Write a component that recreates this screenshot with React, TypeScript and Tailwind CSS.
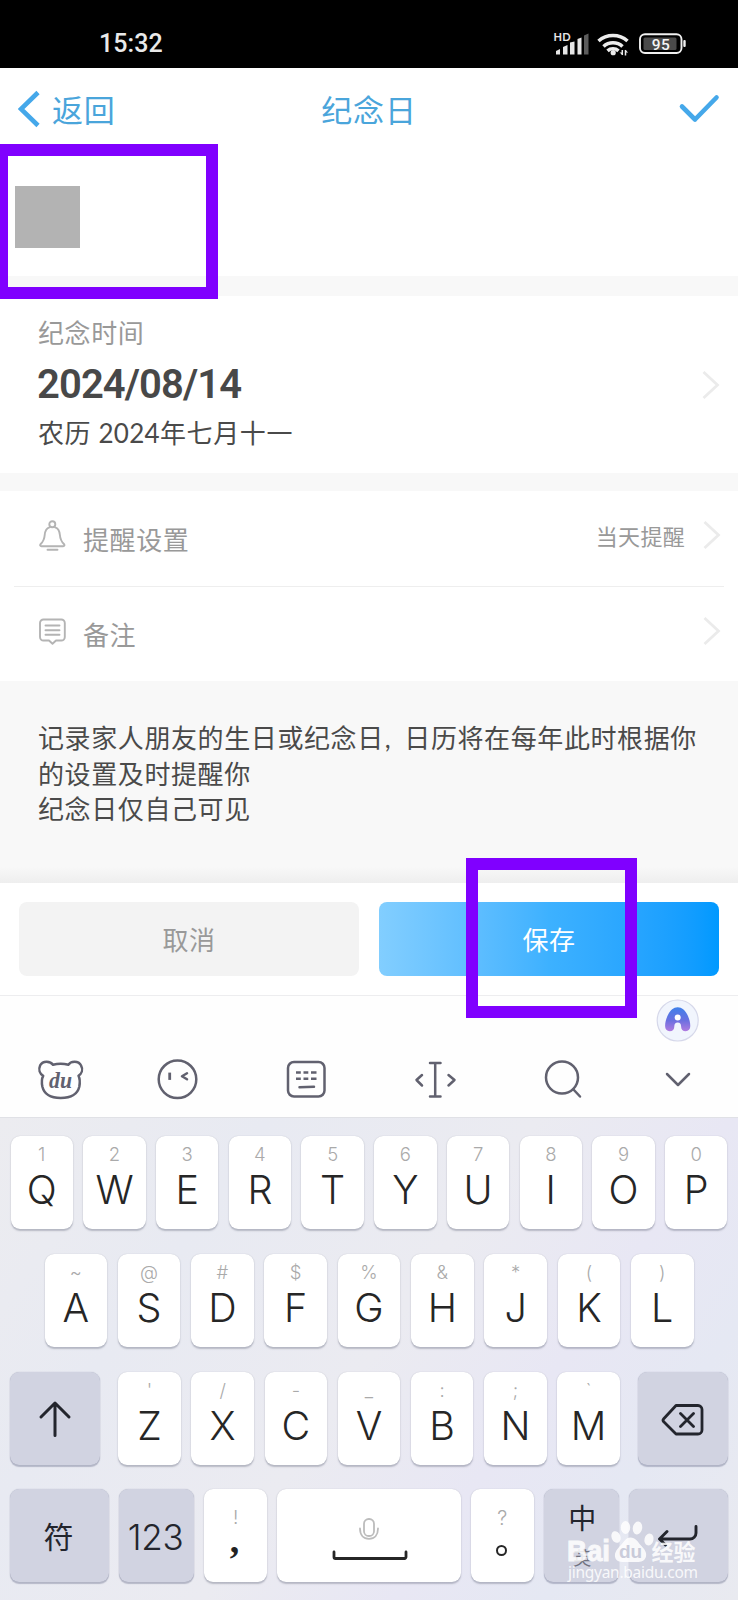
import React from 'react';

const CJK = "font-['Lato','Noto_Sans_CJK_SC',sans-serif]";

function StatusBar() {
  return (
    <div className="h-[68px] bg-black flex items-start justify-between pl-[99px] pr-[52px] shrink-0">
      <span className="mt-[28px] text-[25px] leading-[32px] font-['Roboto',sans-serif] font-medium tracking-[0.1px] text-[#e9e9e9]">15:32</span>
      <svg className="mt-[30px]" width="134" height="28" viewBox="552 30 134 28" fill="none">
        <text x="553.500" y="41" fontSize="11" fontWeight="700" fill="#e6e6e6" fontFamily="Lato" textLength="17">HD</text>
        <path d="M556 54.500v-3.500l4-2v5.500zM563 54.500v-7.500l4.500-2v9.500zM570 54.500v-12l4.500-1v13zM577.500 54.500V39l4-1.500v17z" fill="#e6e6e6" />
        <path d="M584 54.500V35.500l4.500-2v21z" fill="#5c5c5c" />
        <g stroke="#ececec" strokeWidth="3.600">
          <path d="M598.500 41a22 22 0 0 1 29 0M603.500 46.500a14 14 0 0 1 19 0M607.500 50.800a8.500 8.500 0 0 1 11 0" />
        </g>
        <circle cx="613.200" cy="52.700" r="2.600" fill="#ececec" />
        <path d="M622.300 50v5M625.500 50v5.500" stroke="#ececec" strokeWidth="1.500" />
        <path d="m622.800 55.200-3.300-2.600h3.300zM625 49.800l3.200 2.600H625z" fill="#ececec" />
        <rect x="640" y="34.200" width="41.500" height="18.800" rx="5" stroke="#f0f0f0" strokeWidth="1.900" />
        <rect x="643.500" y="37.500" width="33" height="12.500" rx="1.500" fill="#4a4a4a" />
        <rect x="683.300" y="40" width="2.400" height="7" rx="1" fill="#f0f0f0" />
        <text x="661" y="49.600" textAnchor="middle" fontSize="15.500" fontWeight="500" fill="#f5f5f5" fontFamily="Roboto" letterSpacing="0.5">95</text>
      </svg>
    </div>
  );
}

function Chevron() {
  return (
    <svg width="18" height="30" viewBox="0 0 18 30" fill="none" stroke="#ebebeb" strokeWidth="2.800">
      <path d="m1.500 2 14 13-14 13" />
    </svg>
  );
}

function Header() {
  return (
    <div className="h-[82px] flex items-center px-[18px] text-[#4aa5db]">
      <div className="flex-1 flex items-center">
        <svg width="34" height="38" viewBox="0 0 34 38" fill="none" stroke="#45a8ea" strokeWidth="4.600">
          <path d="M20 2.500 3 19l17 16.500" />
        </svg>
        <span className="mt-px text-[31px] tracking-[0.8px] leading-[40px]">返回</span>
      </div>
      <span className="mt-px text-[31px] tracking-[0.8px] leading-[40px]">纪念日</span>
      <div className="flex-1 flex justify-end">
        <svg width="42" height="30" viewBox="0 0 42 30" fill="none" stroke="#45a8ea" strokeWidth="4.600" strokeLinecap="round" strokeLinejoin="round">
          <path d="m4 12.500 13 13L38.500 3.500" />
        </svg>
      </div>
    </div>
  );
}

function BellIcon() {
  return (
    <svg width="28" height="32" viewBox="0 0 28 32" fill="none" stroke="#b4b4b4" strokeWidth="1.900" strokeLinecap="round" strokeLinejoin="round">
      <circle cx="13.300" cy="4.300" r="3" />
      <path d="M10.500 7.300C7 8.300 6 11.300 5.700 15c-.3 4-1.200 6.300-4 9-1 1.100-.6 2.300.8 2.300h21.600c1.400 0 1.800-1.200.8-2.300-2.800-2.700-3.700-5-4-9-.3-3.700-1.300-6.700-4.800-7.700" />
      <path d="M8.500 29.800h10" />
    </svg>
  );
}

function NoteIcon() {
  return (
    <svg width="28" height="28" viewBox="0 0 28 28" fill="none" stroke="#b4b4b4" strokeWidth="1.900" strokeLinejoin="round" strokeLinecap="round">
      <path d="M4.500 1.500h17.800a3.500 3.500 0 0 1 3.500 3.500v14a3.500 3.500 0 0 1-3.500 3.500H17l-3.500 3.300-3.500-3.300H4.500A3.500 3.500 0 0 1 1 19V5a3.500 3.500 0 0 1 3.500-3.500Z" />
      <path d="M6.500 7.500h14M6.500 12.200h14M6.500 16.800h14" />
    </svg>
  );
}

function Form() {
  return (
    <>
      <div className="h-[126px] pt-[36px] pl-[14.500px]">
        <div className="w-[65px] h-[62px] bg-[#b3b3b3]" />
      </div>
      <div className="h-[20px] bg-[#f8f8f8]" />
      <div className="h-[177px] pl-[38px] pr-[18px] flex items-center justify-between">
        <div className="flex flex-col -mt-[4px]">
          <span className="text-[26px] tracking-[0.6px] leading-[36px] text-[#999]">纪念时间</span>
          <span className="text-[40px] leading-[48px] mt-[10px] -ml-px tracking-[-0.9px] font-['Roboto',sans-serif] font-semibold text-[#484848]">2024/08/14</span>
          <span className="text-[26px] tracking-[0.6px] leading-[36px] mt-[6px] text-[#4a4a4a]">农历 <span className="tracking-[0.3px]">2024</span>年七月十一</span>
        </div>
        <Chevron />
      </div>
      <div className="h-[18px] bg-[#f8f8f8]" />
      <div className="h-[95px] pl-[39px] pr-[17px] flex items-center">
        <div className="-mt-[6px]"><BellIcon /></div>
        <span className="ml-[16px] mt-[4px] text-[26px] tracking-[0.6px] text-[#999] flex-1">提醒设置</span>
        <span className="text-[22px] tracking-[0.3px] text-[#999] mr-[18px] -mt-[4px]">当天提醒</span>
        <div className="-mt-[7px]"><Chevron /></div>
      </div>
      <div className="h-px mx-[14px] bg-[#eeeeee]" />
      <div className="h-[94px] pl-[39px] pr-[17px] flex items-center">
        <div className="-mt-[5px]"><NoteIcon /></div>
        <span className="ml-[16px] mt-[3px] text-[26px] tracking-[0.6px] text-[#999] flex-1">备注</span>
        <div className="-mt-[7px]"><Chevron /></div>
      </div>
      <div className="h-[202px] bg-[#f8f8f8] flex flex-col justify-between">
        <p className="pl-[38px] pt-[40px] text-[26px] tracking-[0.6px] leading-[35.600px] text-[#4a4a4a] whitespace-nowrap">
          记录家人朋友的生日或纪念日<span className="inline-block w-[20.500px] pl-[1px]">,</span>日历将在每年此时根据你<br />
          的设置及时提醒你<br />
          纪念日仅自己可见
        </p>
        <div className="h-[16px] bg-linear-to-b from-[#f8f8f8] to-[#eeeeee]" />
      </div>
      <div className="h-[112px] px-[19px] pt-[19px] flex gap-[20px]">
        <button className="h-[74px] w-[340px] rounded-[8px] bg-[#f3f3f3] text-[26px] tracking-[0.6px] text-[#999] pt-[2px]">取消</button>
        <button className="h-[74px] w-[340px] rounded-[8px] bg-linear-to-r from-[#82ceff] via-[#3db1ff] to-[#0099ff] text-[26px] tracking-[0.6px] text-white pt-[2px]">保存</button>
      </div>
    </>
  );
}

function Toolbar() {
  return (
    <div className="h-[122px] border-t border-[#ededef] bg-[#fefefe]">
      <svg width="738" height="121" viewBox="0 996 738 121" fill="none" stroke="#61616f" strokeWidth="2.500" strokeLinecap="round" strokeLinejoin="round">
        <defs>
          <linearGradient id="assistant" x1="0" y1="0" x2="0" y2="1">
            <stop offset="0" stopColor="#3f80ea" />
            <stop offset=".55" stopColor="#6b70e0" />
            <stop offset="1" stopColor="#b07be0" />
          </linearGradient>
        </defs>
        <circle cx="677.700" cy="1020.500" r="20.500" fill="#f1f5fd" stroke="#d6d8ea" strokeWidth="1.200" />
        <path d="M677.700 1007.300c4.300 0 7.200 3 9.400 7 2 3.800 3.200 8 3.200 11.700 0 3.400-1.800 5.200-4.600 5.200-3 0-4.600-1.700-4.600-4.700 0-2.300-1.200-3.900-3.400-3.900s-3.400 1.600-3.400 3.900c0 3-1.600 4.700-4.600 4.700-2.800 0-4.600-1.800-4.600-5.200 0-3.700 1.200-7.900 3.200-11.700 2.200-4 5.100-7 9.400-7Z" fill="url(#assistant)" stroke="none" />
        <circle cx="677.700" cy="1017.600" r="3" fill="#fff" stroke="none" />

        <path d="M53 1064.800q7.500-2.300 15.500 0c2-4 10-4.500 12.500.500 2.500 4.500.500 8.500-2.500 10.500 1.500 3 1.500 7 .8 11-1.800 7.500-8.800 11.200-18.600 11.200s-16.500-3.700-18.300-11.200c-.8-4-.8-8 .8-11-3.500-2-5-6-3-10.500 2.500-5 10.300-4.500 12.800-.500Z" />
        <text x="49" y="1088" fontFamily="Liberation Serif" fontWeight="700" fontStyle="italic" fontSize="23.500" fill="#61616f" stroke="none" textLength="23" lengthAdjust="spacingAndGlyphs">du</text>

        <circle cx="177.500" cy="1079.300" r="18.800" />
        <path d="M169.700 1074v4.500" strokeWidth="2.800" strokeLinecap="square" />
        <path d="m187 1073.300-5 3 5 3" />

        <rect x="288" y="1062" width="36.500" height="34.500" rx="6" />
        <path d="M296 1072.500h4.800M303.500 1072.500h4.800M311 1072.500h5.500M296 1078.800h4.800M303.500 1078.800h4.800M311 1078.800h5.500" strokeLinecap="butt" />
        <path d="m299.500 1087.300 14.500-.5" />

        <path d="M430 1063h10.500M430 1096.500h10.500M435.200 1063v33.500M422 1075l-5.500 5 5.500 5.500M448.500 1075l6 5-6 5.500" />
        <circle cx="562" cy="1077.500" r="16" />
        <path d="m573.500 1089.500 6.500 7" />
        <path d="m667 1074 11 11 11-11" />
      </svg>
    </div>
  );
}

type KeyProps = { main: string; hint: string };

function Key({ main, hint }: KeyProps) {
  return (
    <div className="w-[62.500px] h-[93px] rounded-[9px] bg-white shadow-[0_1.500px_1.500px_rgba(90,95,115,0.35),0_0_1px_rgba(90,95,115,0.25)] flex flex-col items-center font-['Inter',sans-serif]">
      <span className="mt-[7px] h-[22px] text-[18.500px] leading-[22px] font-light text-[#aaaaaa]">{hint}</span>
      <span className="mt-[1px] text-[39.500px] leading-[48px] font-[350] text-[#262626]">{main}</span>
    </div>
  );
}

function FnKey({ className, children }: { className: string; children: React.ReactNode }) {
  return (
    <div className={`${className} h-[93px] rounded-[9px] bg-[#d1d3e1] shadow-[0_1.500px_1px_rgba(90,95,125,0.35),0_0_1px_rgba(90,95,125,0.4)] flex items-center justify-center text-[#23252d]`}>
      {children}
    </div>
  );
}

const ROW1: [string, string][] = [['Q', '1'], ['W', '2'], ['E', '3'], ['R', '4'], ['T', '5'], ['Y', '6'], ['U', '7'], ['I', '8'], ['O', '9'], ['P', '0']];
const ROW2: [string, string][] = [['A', '~'], ['S', '@'], ['D', '#'], ['F', '$'], ['G', '%'], ['H', '&'], ['J', '*'], ['K', '('], ['L', ')']];
const ROW3: [string, string][] = [['Z', "'"], ['X', '/'], ['C', '-'], ['V', '_'], ['B', ':'], ['N', ';'], ['M', '`']];

function Keyboard() {
  return (
    <div className="h-[483px] border-t border-[#e0e1e6] bg-[linear-gradient(125deg,#ececf0_0%,#e8eaf2_25%,#ebebf1_50%,#e8e7f4_68%,#e5e8f3_82%,#e9eaf0_100%)] pt-[18px] flex flex-col gap-[24.800px]">
      <div className="flex justify-between px-[10.500px]">
        {ROW1.map(([m, h]) => <Key key={m} main={m} hint={h} />)}
      </div>
      <div className="flex justify-between px-[44.500px]">
        {ROW2.map(([m, h]) => <Key key={m} main={m} hint={h} />)}
      </div>
      <div className="flex justify-between px-[10px]">
        <FnKey className="w-[90px]">
          <svg className="mt-[2px]" width="34" height="40" viewBox="0 0 34 40" fill="none" stroke="currentColor" strokeWidth="3" strokeLinecap="round" strokeLinejoin="round">
            <path d="M17 36.500V4M3 18 17 4l14 14" />
          </svg>
        </FnKey>
        <div className="flex gap-[10.700px]">
          {ROW3.map(([m, h]) => <Key key={m} main={m} hint={h} />)}
        </div>
        <FnKey className="w-[90px]">
          <svg className="mt-[4px]" width="44" height="34" viewBox="0 0 44 34" fill="none" stroke="currentColor" strokeWidth="2.800" strokeLinecap="round" strokeLinejoin="round">
            <path d="M15 2.500h22a4 4 0 0 1 4 4v20.500a4 4 0 0 1-4 4H15L2.500 18.500a2 2 0 0 1 0-2.500ZM19.500 10.500l13 13M32.500 10.500l-13 13" />
          </svg>
        </FnKey>
      </div>
      <div className="flex justify-between px-[10px]">
        <FnKey className="w-[99px]"><span className="text-[30px] -ml-[2px] mt-px">符</span></FnKey>
        <FnKey className="w-[75px]"><span className="mt-[2px] -ml-[2px] font-['Inter',sans-serif] font-[350] text-[35px] tracking-[-0.3px]">123</span></FnKey>
        <div className="w-[62.500px] h-[93px] rounded-[9px] bg-white shadow-[0_1.500px_1.500px_rgba(90,95,115,0.35),0_0_1px_rgba(90,95,115,0.25)] flex flex-col items-center font-['Inter',sans-serif]">
          <span className="mt-[17px] text-[19px] leading-[24px] font-light text-[#aaa]">!</span>
          <span className="text-[38px] leading-[28px] -mt-[4px] -ml-[2px] font-['Liberation_Serif',serif] font-bold text-[#222]">,</span>
        </div>
        <div className="w-[184px] h-[93px] rounded-[9px] bg-white shadow-[0_1.500px_1.500px_rgba(90,95,115,0.35),0_0_1px_rgba(90,95,115,0.25)] flex justify-center">
          <svg width="80" height="93" viewBox="329 1489 80 93" fill="none" strokeLinecap="round">
            <rect x="364" y="1519" width="10" height="17" rx="4.800" stroke="#bcbcbc" strokeWidth="1.800" />
            <path d="M360 1528.500c0 6.500 3.500 10.300 9 10.300s9-3.800 9-10.300" stroke="#bcbcbc" strokeWidth="1.800" />
            <path d="M334 1552v5a1.500 1.500 0 0 0 1.500 1.500h69a1.500 1.500 0 0 0 1.500-1.500v-5" stroke="#262626" strokeWidth="2.800" />
          </svg>
        </div>
        <div className="w-[62.500px] h-[93px] rounded-[9px] bg-white shadow-[0_1.500px_1.500px_rgba(90,95,115,0.35),0_0_1px_rgba(90,95,115,0.25)] flex flex-col items-center font-['Inter',sans-serif]">
          <span className="mt-[17px] text-[20px] leading-[24px] font-light text-[#aaa]">?</span>
          <span className="mt-[15px] -ml-[2px] size-[11px] rounded-full border-[2.500px] border-[#262626]" />
        </div>
        <FnKey className="w-[75px]">
          <span className="flex flex-col items-center pt-[3px] pl-[2px]">
            <span className="text-[28px] leading-[38px]">中</span>
            <span className="mt-[4px] text-[18px] leading-[34px] text-[#70727f]">英</span>
          </span>
        </FnKey>
        <FnKey className="w-[99px]">
          <svg className="mt-[-1px] ml-[-1px]" width="42" height="24" viewBox="0 0 42 24" fill="none" stroke="currentColor" strokeWidth="2.900" strokeLinecap="round" strokeLinejoin="round">
            <path d="M39 3.500v6.500a6 6 0 0 1-6 6H3M10 8.500 2.500 16l6 6" />
          </svg>
        </FnKey>
      </div>
    </div>
  );
}

function Watermark() {
  return (
    <svg className="absolute left-[560px] top-[1515px]" width="145" height="72" viewBox="560 1515 145 72" fill="#fff" opacity="0.85">
      <text x="567" y="1561" fontFamily="Liberation Sans" fontWeight="700" fontSize="29" stroke="#fff" strokeWidth="1" textLength="43" lengthAdjust="spacingAndGlyphs">Bai</text>
      <ellipse cx="616" cy="1537" rx="4.500" ry="6" transform="rotate(-20 616 1537)" />
      <ellipse cx="625.500" cy="1527.500" rx="4.700" ry="6.500" />
      <ellipse cx="637.500" cy="1528" rx="4.700" ry="6.500" transform="rotate(10 637.500 1528)" />
      <ellipse cx="649" cy="1539.500" rx="4.500" ry="6" transform="rotate(15 649 1539.500)" />
      <path d="M630.500 1537.500c5 0 7 4 10 7.500 4 4 6.500 7.500 5.500 11.500-1 4.500-5 5.500-9 5.500h-13c-4.500 0-8.500-1-9-5.500-.5-4 2-7.500 5.500-11 3.500-3.500 5-8 10-8Z" />
      <text x="630.500" y="1558" textAnchor="middle" fontFamily="Liberation Sans" fontWeight="700" fontSize="19" fill="#c7c9d8">du</text>
      <text x="651.500" y="1559.500" fontFamily="Noto Sans CJK SC" fontWeight="700" fontSize="22" textLength="44">经验</text>
      <text x="568" y="1578" fontFamily="Noto Sans" fontSize="15.500" textLength="130">jingyan.baidu.com</text>
    </svg>
  );
}

export default function App() {
  return (
    <div className={`relative w-[738px] h-[1600px] overflow-hidden bg-white flex flex-col ${CJK}`}>
      <StatusBar />
      <Header />
      <Form />
      <Toolbar />
      <Keyboard />
      <div className="absolute left-[-4.500px] top-[144px] w-[222px] h-[155px] border-[12px] border-[#8000ff]" />
      <div className="absolute left-[466px] top-[858px] w-[171px] h-[160px] border-[12px] border-[#8000ff]" />
      <Watermark />
    </div>
  );
}
